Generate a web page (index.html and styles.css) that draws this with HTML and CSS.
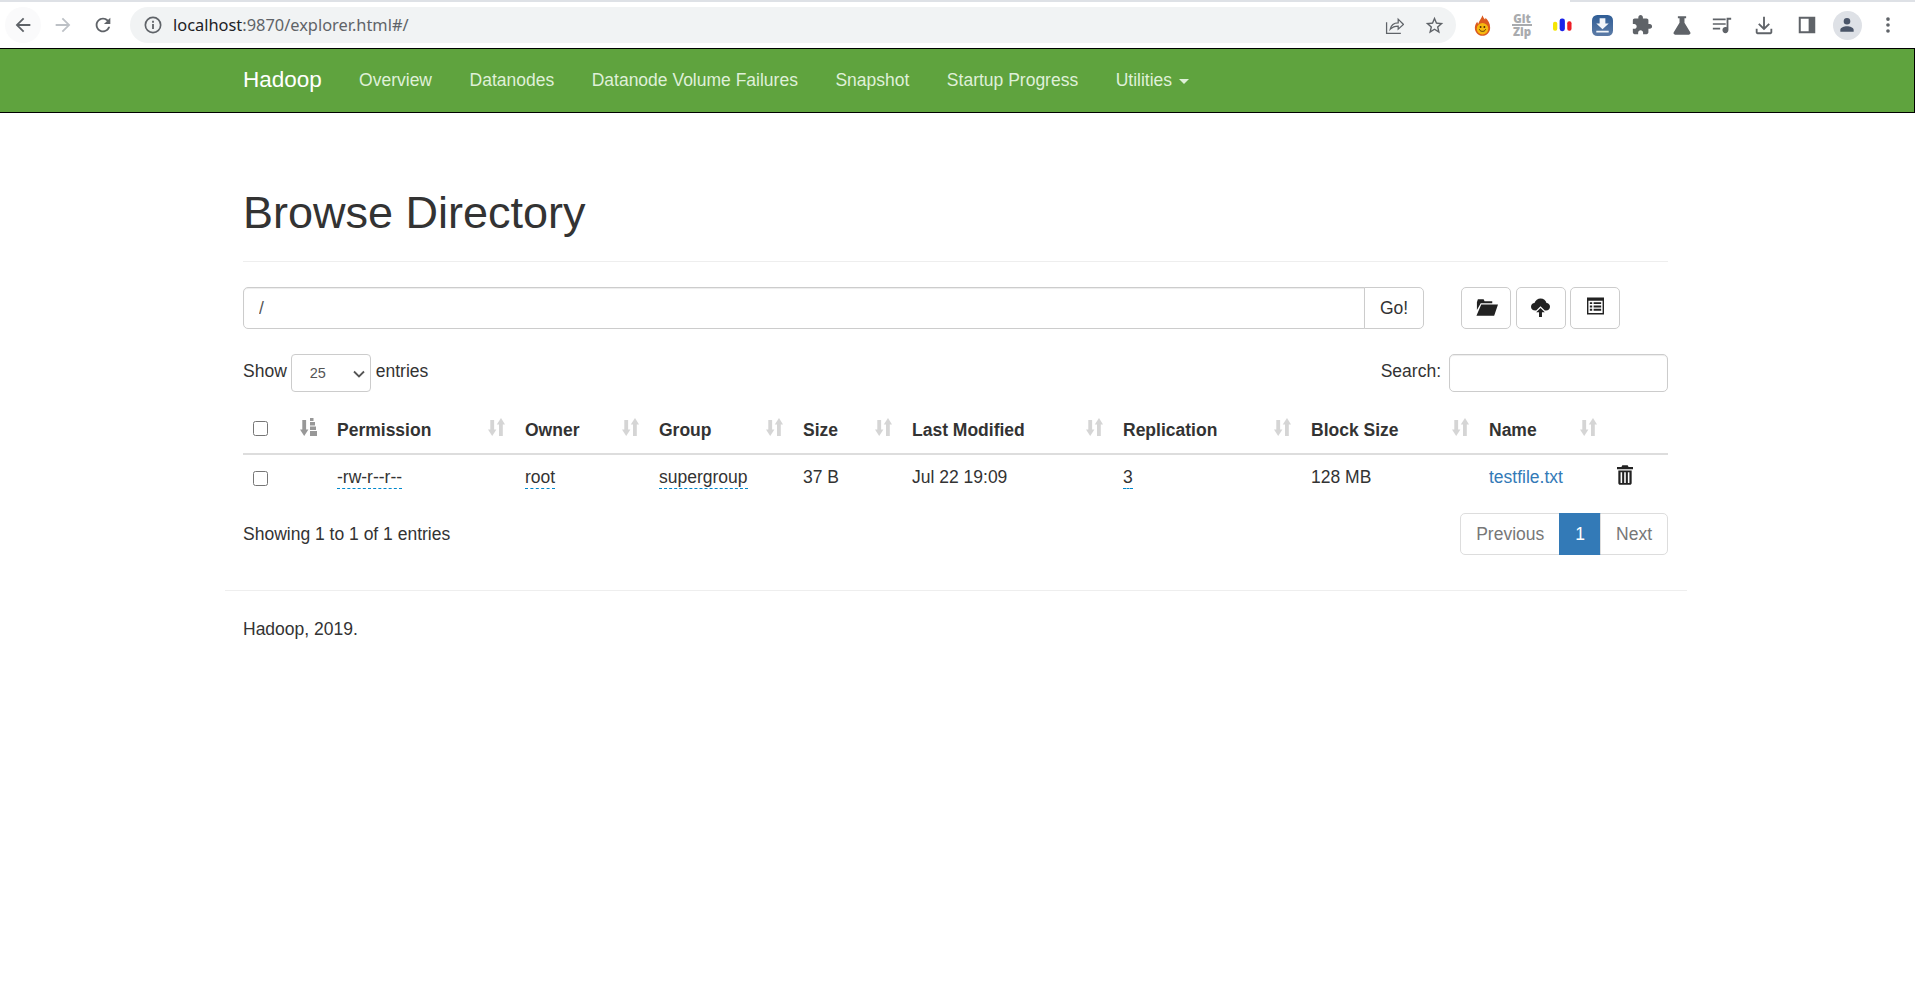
FILE: index.html
```html
<!DOCTYPE html>
<html lang="en">
<head>
    <meta charset="UTF-8">
    <title>Browsing HDFS</title>
    <link rel="stylesheet" href="styles.css">
</head>
<body>
    <svg class="defs" width="0" height="0">
        <symbol id="sort" viewBox="0 0 17 18"><path d="M2.300 2h3.800v9.500h2.300L4.200 18 0 11.500h2.300zM13 0l4 6.500h-2.200V18H11V6.500H8.800z"/></symbol>
        <linearGradient id="dlblue" x1="0" y1="0" x2="0" y2="1"><stop offset="0" stop-color="#2f5d96"/><stop offset="1" stop-color="#5c7ba6"/></linearGradient>
    </svg>

    <div class="chrome">
        <div class="tabstrip"><span class="strip-a"></span><span class="strip-b"></span></div>
        <div class="toolbar">
            <span class="tool hovered"><svg class="ic" viewBox="0 0 24 24"><path d="M20 11H7.830l5.590-5.590L12 4l-8 8 8 8 1.410-1.410L7.830 13H20v-2z"/></svg></span>
            <span class="tool dim"><svg class="ic" viewBox="0 0 24 24"><path d="M12 4l-1.410 1.410L16.170 11H4v2h12.170l-5.580 5.590L12 20l8-8z"/></svg></span>
            <span class="tool"><svg class="ic" viewBox="0 0 24 24"><path d="M17.650 6.350C16.200 4.900 14.210 4 12 4c-4.420 0-7.990 3.580-7.990 8s3.570 8 7.990 8c3.730 0 6.840-2.550 7.730-6h-2.080c-.82 2.330-3.040 4-5.650 4-3.310 0-6-2.690-6-6s2.690-6 6-6c1.660 0 3.140.69 4.220 1.780L13 11h7V4l-2.350 2.350z"/></svg></span>
            <div class="omnibox">
                <svg class="ic-small" viewBox="0 0 16 16"><circle cx="8" cy="8" r="6.800" fill="none" stroke="#5f6368" stroke-width="1.500"/><path d="M7.200 7h1.600v4.500H7.200zM7.200 4.300h1.600v1.600H7.200z"/></svg>
                <span class="url"><b>localhost</b>:9870/explorer.html#/</span>
                <svg class="ic-small share" viewBox="0 0 18 18"><path d="M1.500 6v10.500h13.500M5 12.500c.8-4 3.500-6 7.500-6V3l5 5-5 4.500V9.500c-3 0-5.500.8-7.500 3z" fill="none" stroke="#5f6368" stroke-width="1.200"/></svg>
                <svg class="ic star" viewBox="0 0 24 24"><path d="M22 9.240l-7.190-.62L12 2 9.190 8.630 2 9.240l5.460 4.730L5.820 21 12 17.270 18.180 21l-1.630-7.030L22 9.240zM12 15.400l-3.760 2.270 1-4.280-3.320-2.880 4.380-.38L12 6.100l1.710 4.040 4.380.38-3.320 2.880 1 4.280L12 15.400z"/></svg>
            </div>
            <div class="extensions">
                <span class="tool"><svg class="ic-ext" viewBox="0 0 20 24"><path d="M10 0c1 3 2 4 3 5 .5-1 .5-1.500.5-2 3 3 5.500 6.500 5.500 11.500C19 20 15 24 10 24S1 20 1 14.500c0-3 1.500-5.500 3-7 0 1 .5 2 1 2.500C6 7 8.500 4 10 0z" fill="#dc5a1e"/><circle cx="10" cy="15.800" r="6.800" fill="#f6b90f"/><circle cx="7.800" cy="13.800" r="1.100" fill="#4a2a05"/><circle cx="12.200" cy="13.800" r="1.100" fill="#4a2a05"/><path d="M6.300 16.500c1 3.200 6.400 3.200 7.400 0" fill="none" stroke="#4a2a05" stroke-width="1.100"/></svg></span>
                <span class="tool gitzip"><span>Git</span><i></i><span>Zip</span></span>
                <span class="tool"><svg class="ic-ext bars" viewBox="0 0 20 20"><rect x="0" y="6" width="4.500" height="9.500" rx="2" fill="#f5e505"/><rect x="7" y="2.500" width="5.500" height="13.500" rx="2.500" fill="#1a22e8"/><rect x="15" y="5.500" width="4.500" height="10" rx="2" fill="#ee1c25"/></svg></span>
                <span class="tool"><svg class="ic-ext large" viewBox="0 0 22 22"><rect width="22" height="22" rx="5.500" fill="url(#dlblue)"/><path d="M8 3.500h6v5.500h3.500L11 15 4.500 9H8zM4.500 16.500h13v1.800h-13z" fill="#f2f5f9"/></svg></span>
                <span class="tool"><svg class="ic" viewBox="0 0 24 24"><path d="M20.500 11H19V7c0-1.100-.9-2-2-2h-4V3.500C13 2.120 11.880 1 10.500 1S8 2.120 8 3.500V5H4c-1.100 0-1.990.9-1.990 2v3.800H3.500c1.490 0 2.700 1.210 2.700 2.700s-1.210 2.700-2.700 2.700H2V20c0 1.100.9 2 2 2h3.800v-1.500c0-1.490 1.210-2.700 2.700-2.700 1.490 0 2.700 1.210 2.700 2.700V22H17c1.100 0 2-.9 2-2v-4h1.500c1.380 0 2.500-1.120 2.500-2.500S21.880 11 20.500 11z"/></svg></span>
                <span class="tool"><svg class="ic" viewBox="0 0 24 24"><path d="M7.500 2.500h9v2.200h-1.800v4.800L21 20c.7 1.200 0 2.500-1.500 2.500h-15C3 22.500 2.300 21.200 3 20L9.300 9.500V4.700H7.500z"/></svg></span>
                <span class="tool"><svg class="ic" viewBox="0 0 24 24"><path d="M2 5h14v1.800H2zM2 10h14v1.800H2zM2 15h8v1.800H2zM17 4h5v2.200h-3V17.500c0 2-1.500 3.500-3.300 3.500S12.500 19.500 12.500 17.500s1.500-3.300 3.200-3.300c.5 0 .9.100 1.300.3z"/></svg></span>
                <span class="tool wide"><svg class="ic nudge-1" viewBox="0 0 24 24"><path d="M11 3h2v11l4-4 1.400 1.400L12 17.800l-6.400-6.400L7 10l4 4zM3 16h2v4h14v-4h2v4c0 1.100-.9 2-2 2H5c-1.100 0-2-.9-2-2z"/></svg></span>
                <span class="tool wide"><svg class="ic nudge-3" viewBox="0 0 24 24"><path d="M3 3h18v18H3zM5.200 5.200v13.600h8.600V5.200z" fill-rule="evenodd"/></svg></span>
                <span class="tool wide"><span class="avatar"><svg viewBox="0 0 24 24"><path d="M12 11.500a4 4 0 1 0 0-8 4 4 0 0 0 0 8zM12 13.500c-3.500 0-8 1.700-8 4.300V20h16v-2.200c0-2.600-4.500-4.300-8-4.300z"/></svg></span></span>
                <span class="tool"><svg class="ic" viewBox="0 0 24 24"><circle cx="12" cy="5.500" r="2"/><circle cx="12" cy="12" r="2"/><circle cx="12" cy="18.500" r="2"/></svg></span>
            </div>
        </div>
    </div>

    <nav class="navbar">
        <div class="container nav-inner">
            <a class="brand" href="#">Hadoop</a>
            <a class="nav-link" href="#">Overview</a>
            <a class="nav-link" href="#">Datanodes</a>
            <a class="nav-link" href="#">Datanode Volume Failures</a>
            <a class="nav-link" href="#">Snapshot</a>
            <a class="nav-link" href="#">Startup Progress</a>
            <a class="nav-link" href="#">Utilities <span class="caret"></span></a>
        </div>
    </nav>

    <div class="container">
        <div class="page-header">
            <h1>Browse Directory</h1>
        </div>

        <div class="path-row">
            <div class="path-group">
                <input class="form-control path-input" type="text" value="/">
                <button class="go-btn">Go!</button>
            </div>
            <div class="tool-btns">
                <button class="btn-icon"><svg class="glyph" viewBox="0 0 24 18"><path d="M2 4l1-3h6l1 2h8v2H6L2 12zM6.500 6.500H24L20 18H1.500z"/></svg></button>
                <button class="btn-icon"><svg class="glyph cloud" viewBox="0 0 22 22"><path d="M5 14.500C2 14.500 0 12.500 0 10s2-4.200 4-4.200C5 2.700 8 .5 11 .5c3.500 0 6.300 2.300 7 5.300 2.300.2 4 2 4 4.300 0 2.400-2 4.400-4.500 4.400H16l-5-5-5 5z"/><path d="M11 11.500l5 5h-3.300V22H9.300v-5.500H6z"/></svg></button>
                <button class="btn-icon"><svg class="glyph list" viewBox="0 0 18 18"><path fill-rule="evenodd" d="M0 0h18v18H0zM1.500 3.500v13h15v-13zM3 5h2.500v2H3zM7 5h8v2H7zM3 8.500h2.500v2H3zM7 8.500h8v2H7zM3 12h2.500v2H3zM7 12h8v2H7z"/></svg></button>
            </div>
        </div>

        <div class="table-controls">
            <label class="ctl">
                <span class="lbl">Show</span>
                <span class="select-wrap">
                    <select class="length-select"><option>25</option></select>
                    <svg class="chevron" viewBox="0 0 12 8"><path d="M1 1.500l5 5 5-5" fill="none" stroke="#555" stroke-width="1.800"/></svg>
                </span>
                <span class="lbl">entries</span>
            </label>
            <label class="ctl">
                <span class="lbl">Search:</span>
                <input class="form-control search-input" type="search">
            </label>
        </div>

        <table class="files">
            <colgroup>
                <col class="c-check"><col class="c-sort"><col class="c-perm"><col class="c-owner"><col class="c-group"><col class="c-size"><col class="c-date"><col class="c-repl"><col class="c-block"><col class="c-name"><col class="c-del">
            </colgroup>
            <thead>
                <tr>
                    <th><input type="checkbox"></th>
                    <th class="sortable"><svg class="sort-icon active" viewBox="0 0 17 18"><path d="M2.300 2h3.800v9.500h2.300L4.200 18 0 11.500h2.300zM10 0h3.500v3H10zM10 4h5v3.500h-5zM10 8.500h6v3.500h-6zM10 13h7.500v5H10z"/></svg></th>
                    <th class="sortable">Permission<svg class="sort-icon"><use href="#sort"/></svg></th>
                    <th class="sortable">Owner<svg class="sort-icon"><use href="#sort"/></svg></th>
                    <th class="sortable">Group<svg class="sort-icon"><use href="#sort"/></svg></th>
                    <th class="sortable">Size<svg class="sort-icon"><use href="#sort"/></svg></th>
                    <th class="sortable">Last Modified<svg class="sort-icon"><use href="#sort"/></svg></th>
                    <th class="sortable">Replication<svg class="sort-icon"><use href="#sort"/></svg></th>
                    <th class="sortable">Block Size<svg class="sort-icon"><use href="#sort"/></svg></th>
                    <th class="sortable">Name<svg class="sort-icon"><use href="#sort"/></svg></th>
                    <th></th>
                </tr>
            </thead>
            <tbody>
                <tr>
                    <td><input type="checkbox"></td>
                    <td></td>
                    <td><span class="editable">-rw-r--r--</span></td>
                    <td><span class="editable">root</span></td>
                    <td><span class="editable">supergroup</span></td>
                    <td>37 B</td>
                    <td>Jul 22 19:09</td>
                    <td><span class="editable">3</span></td>
                    <td>128 MB</td>
                    <td><a class="file-link" href="#">testfile.txt</a></td>
                    <td><svg class="trash" viewBox="0 0 18 22"><path fill-rule="evenodd" d="M6 0h6l1 2h5v2.500H0V2h5zM1.500 6h15v14c0 1.200-.8 2-2 2h-11c-1.200 0-2-.8-2-2zM4 8v12h1.800V8zM8.100 8v12h1.800V8zM12.200 8v12H14V8z"/></svg></td>
                </tr>
            </tbody>
        </table>

        <div class="table-footer">
            <div class="info">Showing 1 to 1 of 1 entries</div>
            <ul class="pagination">
                <li><a href="#">Previous</a></li>
                <li class="active"><a href="#">1</a></li>
                <li><a href="#">Next</a></li>
            </ul>
        </div>
    </div>

    <div class="container footer">
        <hr>
        <p>Hadoop, 2019.</p>
    </div>
</body>
</html>
```

FILE: styles.css
```css
* {
    box-sizing: border-box;
}
body {
    margin: 0;
    font-family: "Liberation Sans", Arial, sans-serif;
    font-size: 17.5px;
    line-height: 1.42857;
    color: #333;
    background: #fff;
}
a {
    text-decoration: none;
}
.defs {
    display: block;
    height: 0;
}

/* browser bar */
.chrome {
    height: 48px;
    background: #fff;
}
.tabstrip {
    display: flex;
    justify-content: space-between;
    height: 2px;
}
.strip-a {
    width: 1490px;
    background: #dee1e6;
}
.strip-b {
    width: 345px;
    background: #dee1e6;
}
.toolbar {
    display: flex;
    align-items: center;
    height: 46px;
    padding: 0 7px 0 3px;
}
.tool {
    display: flex;
    align-items: center;
    justify-content: center;
    width: 40px;
    height: 36px;
    fill: #5f6368;
}
.tool.wide {
    width: 42px;
}
.tool.hovered {
    width: 36px;
    margin: 0 2px;
    border-radius: 50%;
    background: #fafafb;
}
.tool.dim {
    fill: #bdc1c6;
}
.ic {
    width: 22px;
    height: 22px;
}
.nudge-1 {
    margin-left: 2px;
}
.nudge-3 {
    margin-left: 4px;
}
.ic-small {
    width: 18px;
    height: 18px;
    fill: #5f6368;
    flex: none;
}
.ic-ext {
    width: 17px;
    height: 21px;
}
.ic-ext.bars {
    width: 19px;
    height: 21px;
}
.ic-ext.large {
    width: 21px;
    height: 21px;
}
.omnibox {
    display: flex;
    align-items: center;
    flex: 1;
    height: 36px;
    margin: 0 6px 0 7px;
    padding: 0 11px 0 14px;
    border-radius: 18px;
    background: #f1f3f4;
    fill: #5f6368;
}
.url {
    flex: 1;
    margin-left: 11px;
    font-family: "Noto Sans", sans-serif;
    font-size: 16.400px;
    color: #5f6368;
}
.url b {
    font-weight: normal;
    color: #202124;
}
.share {
    width: 19px;
    height: 19px;
    margin-right: 20px;
}
.star {
    width: 21px;
    height: 21px;
}
.extensions {
    display: flex;
}
.gitzip {
    flex-direction: column;
    font-family: "Open Sans", sans-serif;
    font-size: 11.500px;
    font-weight: 800;
    line-height: 9px;
    color: #a9abae;
}
.gitzip i {
    display: block;
    width: 20px;
    height: 2px;
    margin: 1px 0;
    background: #a9abae;
}
.avatar {
    display: flex;
    align-items: center;
    justify-content: center;
    width: 29px;
    height: 29px;
    border-radius: 50%;
    background: #dee1e6;
}
.avatar svg {
    width: 20px;
    height: 20px;
    fill: #4a5568;
}

/* navbar */
.navbar {
    height: 65px;
    background: #5fa33e;
    border: 1px solid #000;
    border-left: 0;
}
.container {
    width: 1462px;
    margin: 0 0 0 225px;
    padding: 0 19px 0 18px;
}
.nav-inner {
    display: flex;
    align-items: center;
    height: 100%;
}
.brand {
    margin-right: 18.500px;
    font-size: 22.500px;
    color: #fff;
}
.nav-link {
    padding: 0 18.750px;
    color: #dff0d8;
}
.caret {
    display: inline-block;
    margin-left: 2px;
    vertical-align: middle;
    border-top: 5px solid;
    border-left: 5px solid transparent;
    border-right: 5px solid transparent;
}

/* page */
.page-header {
    margin: 75px 0 25px;
    padding-bottom: 11px;
    border-bottom: 1px solid #eee;
}
h1 {
    margin: 0 0 12.500px;
    font-size: 45px;
    font-weight: 500;
    line-height: 49.500px;
}
.form-control {
    height: 42px;
    padding: 0 15px;
    border: 1px solid #ccc;
    border-radius: 5px;
    font: inherit;
    color: #555;
    box-shadow: inset 0 1px 1px rgba(0,0,0,.075);
}
.path-row {
    display: flex;
    margin-bottom: 25px;
}
.path-group {
    display: flex;
    width: 1181px;
    margin-right: 37px;
}
.path-input {
    flex: 1;
    border-radius: 5px 0 0 5px;
}
.go-btn {
    width: 60px;
    margin-left: -1px;
    border: 1px solid #ccc;
    border-radius: 0 5px 5px 0;
    background: #fff;
    font: inherit;
    color: #333;
}
.tool-btns {
    display: flex;
    gap: 4.500px;
}
.btn-icon {
    display: flex;
    align-items: center;
    justify-content: center;
    width: 50px;
    height: 42px;
    padding: 0;
    border: 1px solid #ccc;
    border-radius: 5px;
    background: #fff;
}
.glyph {
    width: 23px;
    height: 18px;
    margin-bottom: 2px;
    fill: #222;
}
.glyph.cloud {
    width: 19px;
    height: 19px;
}
.glyph.list {
    width: 17px;
    height: 18px;
    margin-bottom: 4px;
}
.table-controls {
    display: flex;
    justify-content: space-between;
    align-items: center;
}
.ctl {
    display: flex;
    align-items: center;
    gap: 4px;
}
.lbl {
    margin-bottom: 3px;
}
.select-wrap {
    position: relative;
    display: block;
    height: 38px;
    margin-right: 1px;
}
.length-select {
    width: 80px;
    height: 38px;
    padding-left: 18px;
    border: 1px solid #ccc;
    border-radius: 4px;
    background: #fff;
    font-family: inherit;
    font-size: 14.500px;
    color: #555;
    appearance: none;
}
.chevron {
    position: absolute;
    top: 16px;
    right: 6px;
    width: 12px;
    height: 8px;
    pointer-events: none;
}
.search-input {
    width: 219px;
    height: 38px;
    margin-left: 4px;
}

/* table */
.files {
    width: 1425px;
    margin-top: 12px;
    border-collapse: collapse;
    table-layout: fixed;
}
.c-check { width: 47px; }
.c-sort { width: 37px; }
.c-perm { width: 188px; }
.c-owner { width: 134px; }
.c-group { width: 144px; }
.c-size { width: 109px; }
.c-date { width: 211px; }
.c-repl { width: 188px; }
.c-block { width: 178px; }
.c-name { width: 128px; }
.c-del { width: 61px; }
.files th {
    position: relative;
    height: 50px;
    padding: 12px 10px 8px;
    border-bottom: 2.500px solid #ddd;
    font-weight: 700;
    text-align: left;
}
.files th:first-child {
    padding: 10px;
}
.files td {
    height: 47px;
    padding: 9px 10px 11px;
}
.files td:first-child {
    padding: 10px;
}
.files input[type="checkbox"] {
    display: block;
    width: 15px;
    height: 15px;
    margin: 0;
}
.sort-icon {
    position: absolute;
    right: 10px;
    bottom: 17px;
    width: 17px;
    height: 18px;
    fill: #333;
    opacity: .2;
}
.sort-icon.active {
    opacity: .5;
}
.editable {
    padding-bottom: 1px;
    border-bottom: 1px dashed #08c;
}
.file-link {
    color: #337ab7;
}
.trash {
    display: block;
    width: 16px;
    height: 20px;
    margin-top: -4px;
    fill: #222;
}
.table-footer {
    display: flex;
    justify-content: space-between;
    align-items: flex-start;
    margin-top: 12px;
}
.info {
    padding-top: 9px;
}
.pagination {
    display: flex;
    margin: 0;
    padding: 0;
    list-style: none;
}
.pagination a {
    display: block;
    height: 42px;
    margin-left: -1px;
    padding: 8px 15px;
    border: 1px solid #ddd;
    color: #777;
}
.pagination li:first-child a {
    border-radius: 5px 0 0 5px;
}
.pagination li:last-child a {
    border-radius: 0 5px 5px 0;
}
.pagination .active a {
    border-color: #337ab7;
    background: #337ab7;
    color: #fff;
}
.footer hr {
    margin: 35px -19px 26px -18px;
    border: 0;
    border-top: 1px solid #eee;
}
.footer p {
    margin: 0;
}
```
